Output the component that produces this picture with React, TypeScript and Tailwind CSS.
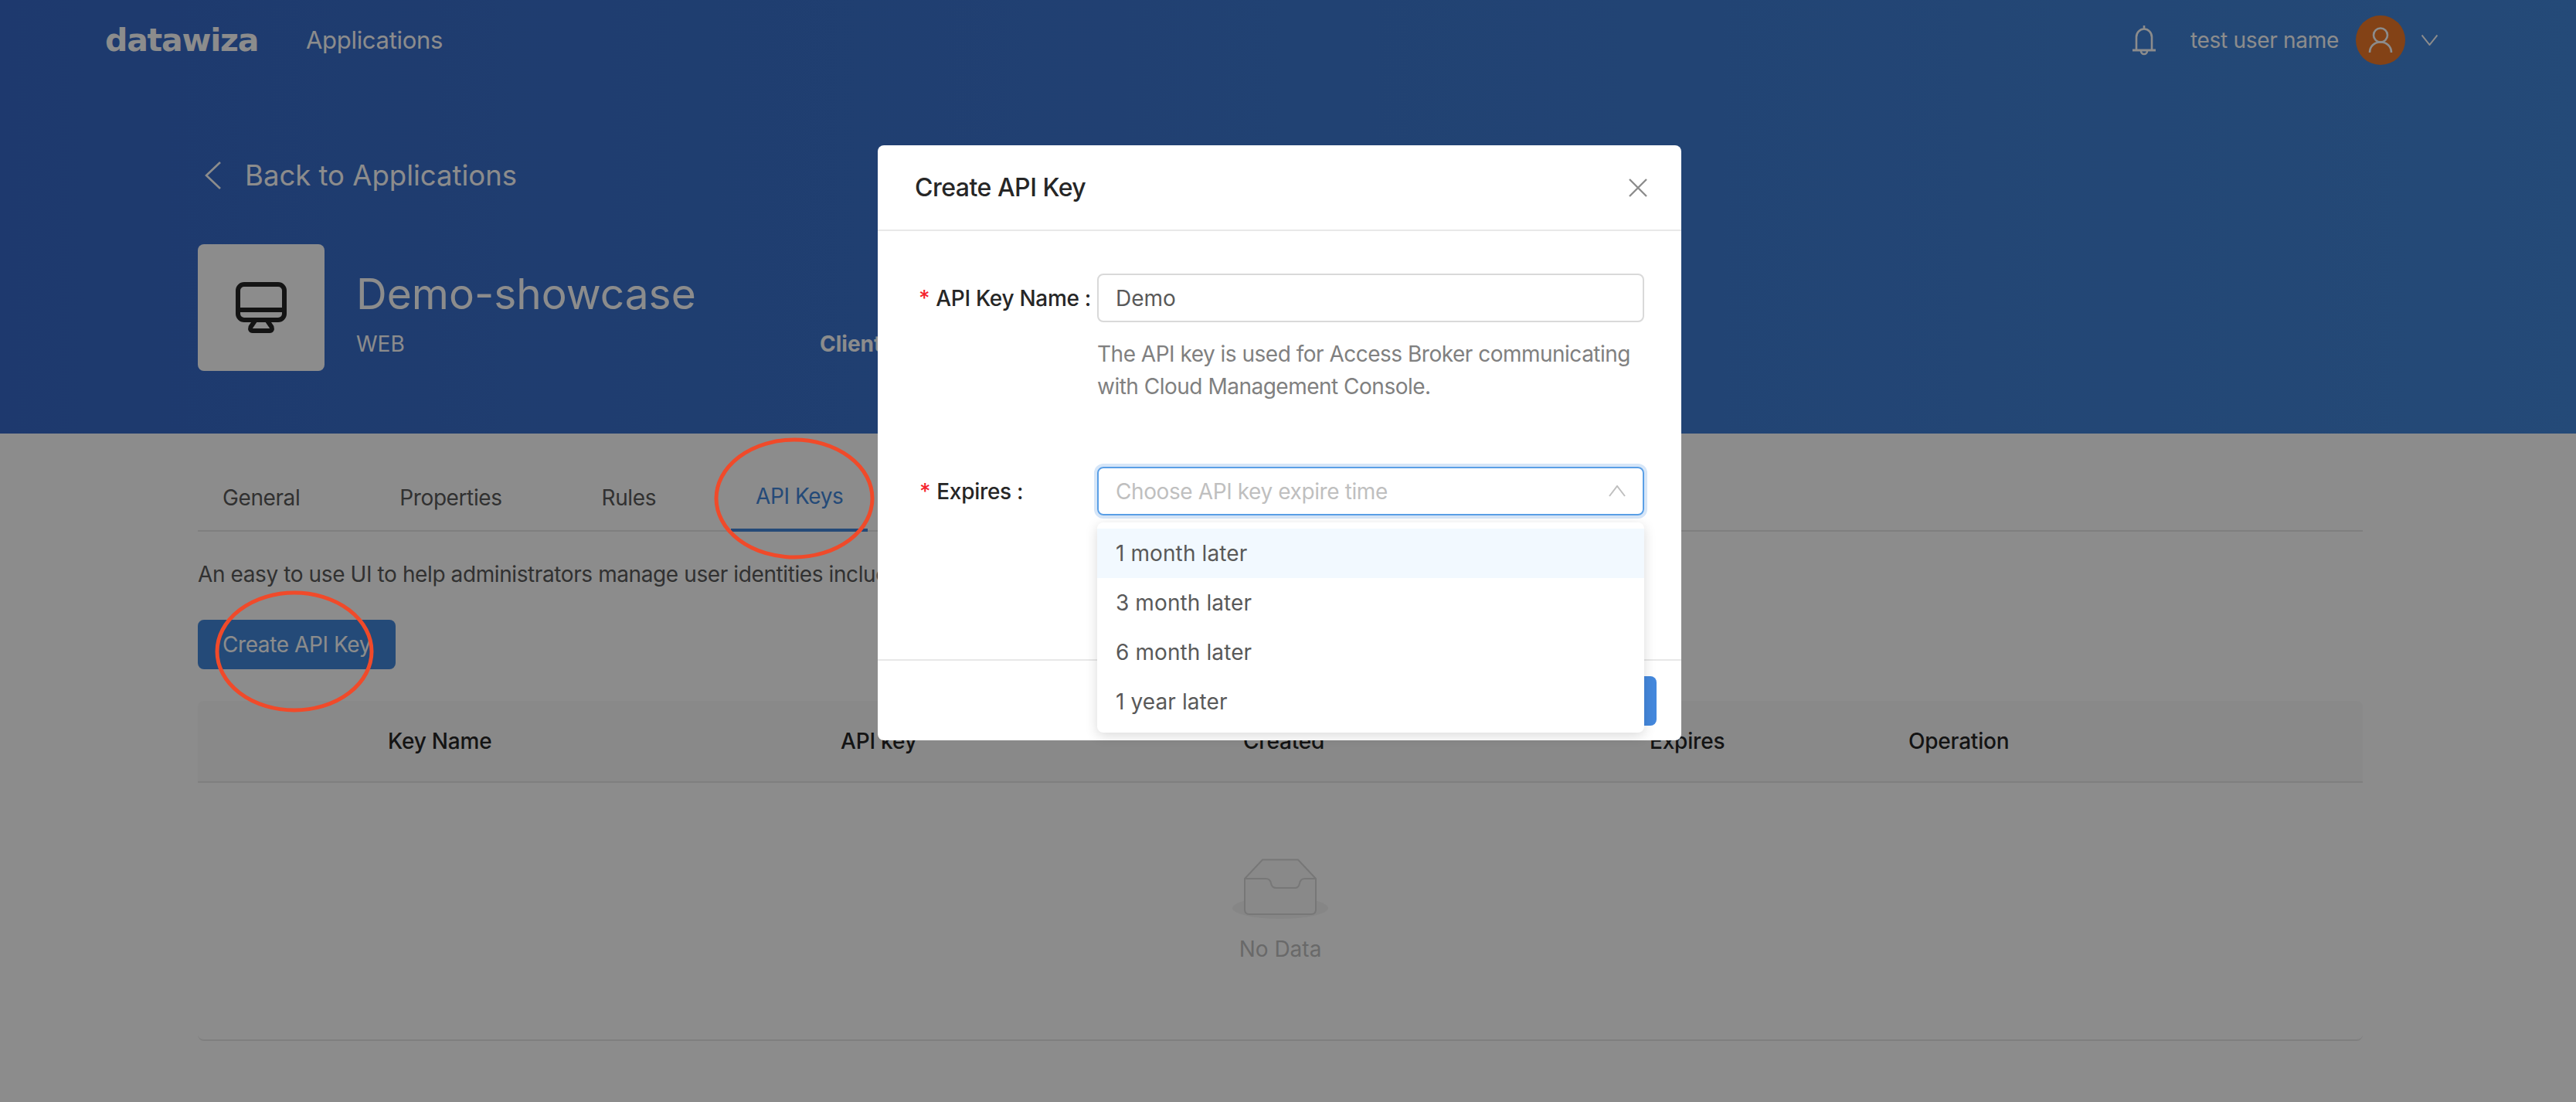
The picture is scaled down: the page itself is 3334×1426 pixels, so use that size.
const tabs = ["General", "Properties", "Rules", "API Keys"];
const options = ["1 month later", "3 month later", "6 month later", "1 year later"];

const Navbar = () => {
    return (
        <div className="flex items-center justify-between h-[104px] pl-[136px] pr-[179px]">
            <div className="flex items-center">
                <span className="w-[260px] text-[41px] font-bold font-['DejaVu_Sans',sans-serif] tracking-[-1.2px] leading-[56px] text-white">datawiza</span>
                <span className="text-[31px] tracking-[-0.3px] text-white">Applications</span>
            </div>
            <div className="flex items-center">
                <svg width="32" height="40" viewBox="0 0 32 40" fill="none" stroke="white" strokeWidth="2.6" className="mr-[44px]">
                    <path d="M16 1v5" />
                    <path d="M6 33V16a10 10.5 0 0 1 20 0v17" />
                    <path d="M1 33h30" strokeWidth="3" />
                    <path d="M12 34a4 4 0 0 0 8 0" />
                </svg>
                <span className="text-[28px] tracking-[-0.3px] text-white">test user name</span>
                <div className="w-[64px] h-[64px] rounded-full bg-[#ee7828] flex justify-center items-center ml-[22px] mr-[21px]">
                    <svg width="32" height="34" viewBox="0 0 32 34" fill="none" stroke="white" strokeWidth="2.6">
                        <circle cx="16" cy="10.5" r="9" />
                        <path d="M2 33C2 25 8 19.5 16 19.5C24 19.5 30 25 30 33" />
                    </svg>
                </div>
                <svg width="21" height="14" viewBox="0 0 21 14" fill="none" stroke="white" strokeWidth="2">
                    <path d="M0.5 0.5L10.5 13L20.5 0.5" />
                </svg>
            </div>
        </div>
    );
};

const AppHeader = () => {
    return (
        <div className="h-[561px] bg-linear-to-r from-[#3769c8] to-[#4387da] text-white">
            <Navbar />
            <div className="flex items-center h-[48px] mt-[99px] pl-[265px]">
                <svg width="21" height="36" viewBox="0 0 21 36" fill="none" stroke="white" strokeWidth="2.6">
                    <path d="M20 1L2 18L20 35" />
                </svg>
                <span className="ml-[31px] text-[36.5px] leading-[48px]">Back to Applications</span>
            </div>
            <div className="flex mt-[65px] pl-[256px]">
                <div className="w-[164px] h-[164px] rounded-[8px] bg-white flex justify-center items-center">
                    <svg width="66" height="66" viewBox="0 0 66 66" fill="none" stroke="#262626" strokeWidth="6">
                        <rect x="3" y="3" width="60" height="46" rx="8" />
                        <path d="M3 36H63" />
                        <path d="M25 50L19.5 58Q18 63 22 63H44Q48 63 46.5 58L41 50" />
                    </svg>
                </div>
                <div className="ml-[41px] pt-[28px]">
                    <h1 className="text-[55px] leading-[72px]">Demo-showcase</h1>
                    <div className="flex mt-[9px] text-[28px] leading-[40px]">
                        <span className="w-[600px]">WEB</span>
                        <span className="font-bold">Client ID:</span>
                    </div>
                </div>
            </div>
        </div>
    );
};

const ApiKeysTable = () => {
    return (
        <div className="mt-[41px]">
            <div className="grid grid-cols-[832px_521px_526px_335px_1fr] items-center h-[106px] bg-[#fafafa] rounded-t-[8px] border-b-2 border-[#e8e8e8] text-[28px] tracking-[-0.2px] font-medium text-[#262626]">
                <span className="pl-[246px]">Key Name</span>
                <span>API key</span>
                <span>Created</span>
                <span>Expires</span>
                <span>Operation</span>
            </div>
            <div className="h-[334px] border-b-2 border-[#e8e8e8] rounded-b-[8px] flex flex-col items-center pt-[98px]">
                <svg width="126" height="80" viewBox="0 0 126 80" fill="none">
                    <ellipse cx="63" cy="64" rx="62" ry="14" fill="#f5f5f5" />
                    <path d="M17 26L40 1.5H86L109 26V66Q109 72 103 72H23Q17 72 17 66Z" fill="#fafafa" stroke="#d9d9d9" strokeWidth="2" />
                    <path d="M17 26H44Q50 26 51 32Q52 38 58 38H82Q87 38 88 32Q89 26 95 26H109" stroke="#d9d9d9" strokeWidth="2" />
                </svg>
                <span className="mt-[17px] text-[28px] leading-[40px] text-[#bfbfbf]">No Data</span>
            </div>
        </div>
    );
};

const CreateKeyModal = () => {
    return (
        <div className="absolute left-[1136px] top-[188px] w-[1040px] h-[770px] rounded-[8px] bg-white flex flex-col">
            <div className="flex items-center justify-between h-[111px] pl-[48px] pr-[44px] border-b-2 border-[#e8e8e8]">
                <span className="text-[32px] tracking-[-0.5px] font-medium text-[#262626]">Create API Key</span>
                <svg width="24" height="24" viewBox="0 0 24 24" fill="none" stroke="#8c8c8c" strokeWidth="2.4">
                    <path d="M1 1L23 23M23 1L1 23" />
                </svg>
            </div>
            <div className="flex-1 pt-[55px] text-[28px]">
                <div className="flex">
                    <label className="flex items-center justify-end w-[284px] h-[63px] font-medium tracking-[-0.3px] text-[#262626] pr-[8px]">
                        <span className="text-[#f5222d] mr-[8px]">*</span>API Key Name :
                    </label>
                    <div className="w-[708px]">
                        <div className="flex items-center h-[63px] px-[22px] rounded-[8px] border-2 border-[#d9d9d9] text-[#595959]">Demo</div>
                        <p className="mt-[20px] leading-[42px] tracking-[-0.5px] text-[#808080]">The API key is used for Access Broker communicating with Cloud Management Console.</p>
                    </div>
                </div>
                <div className="flex mt-[83px]">
                    <label className="flex items-center w-[284px] h-[63px] font-medium tracking-[-0.3px] text-[#262626] pl-[54px]">
                        <span className="text-[#f5222d] mr-[8px]">*</span>Expires :
                    </label>
                    <div className="flex items-center justify-between w-[708px] h-[63px] px-[22px] rounded-[8px] border-2 border-[#5a9fe6] ring-4 ring-[#d6e6f8] text-[#bfbfbf]">
                        <span className="tracking-[-0.4px]">Choose API key expire time</span>
                        <svg width="22" height="15" viewBox="0 0 22 15" fill="none" stroke="#bfbfbf" strokeWidth="2">
                            <path d="M1 14L11 1L21 14" />
                        </svg>
                    </div>
                </div>
            </div>
            <div className="flex justify-end items-center gap-[16px] h-[105px] pr-[32px] border-t-2 border-[#e8e8e8]">
                <button className="h-[64px] px-[32px] rounded-[8px] bg-[#4488dd] text-[28px] text-white">Create</button>
            </div>
            <div className="absolute left-[284px] top-[488px] w-[708px] py-[8px] rounded-[8px] bg-white shadow-[0_4px_16px_rgba(0,0,0,0.15)] text-[28px] tracking-[0.1px] text-[#595959]">
                {options.map((option, i) => (
                    <div key={option} className={i === 0 ? "flex items-center h-[64px] px-[24px] bg-[#f2f9ff]" : "flex items-center h-[64px] px-[24px]"}>{option}</div>
                ))}
            </div>
        </div>
    );
};

const App = () => {
    return (
        <div className="relative w-[3334px] h-[1426px] overflow-hidden bg-white font-[Inter,sans-serif]">
            <AppHeader />
            <div className="pl-[256px] pr-[276px] pt-[39px]">
                <div className="flex gap-[65px] h-[88px] border-b-2 border-[#e8e8e8] text-[28px] tracking-[-0.4px] text-[#595959]">
                    {tabs.map((tab) => (
                        <div key={tab} className={tab === "API Keys" ? "flex items-center h-[88px] px-[32px] border-b-4 border-[#4387da] text-[#4387da]" : "flex items-center h-[88px] px-[32px]"}>{tab}</div>
                    ))}
                </div>
                <p className="mt-[34px] text-[28px] tracking-[-0.4px] leading-[42px] text-[#595959]">An easy to use UI to help administrators manage user identities including password and MFA.</p>
                <button className="flex items-center justify-center w-[256px] h-[64px] mt-[38px] rounded-[8px] bg-[#4387da] text-[28px] tracking-[-0.4px] text-white">Create API Key</button>
                <ApiKeysTable />
            </div>
            <div className="absolute inset-0 bg-black/45"></div>
            <CreateKeyModal />
            <svg width="212" height="162" viewBox="0 0 212 162" fill="none" stroke="#f04a2a" strokeWidth="5" className="absolute left-[922px] top-[564px]">
                <ellipse cx="106" cy="81" rx="101" ry="76" />
            </svg>
            <svg width="212" height="162" viewBox="0 0 212 162" fill="none" stroke="#f04a2a" strokeWidth="5" className="absolute left-[275px] top-[762px]">
                <ellipse cx="106" cy="81" rx="100" ry="76" />
            </svg>
        </div>
    );
};

export default App;
